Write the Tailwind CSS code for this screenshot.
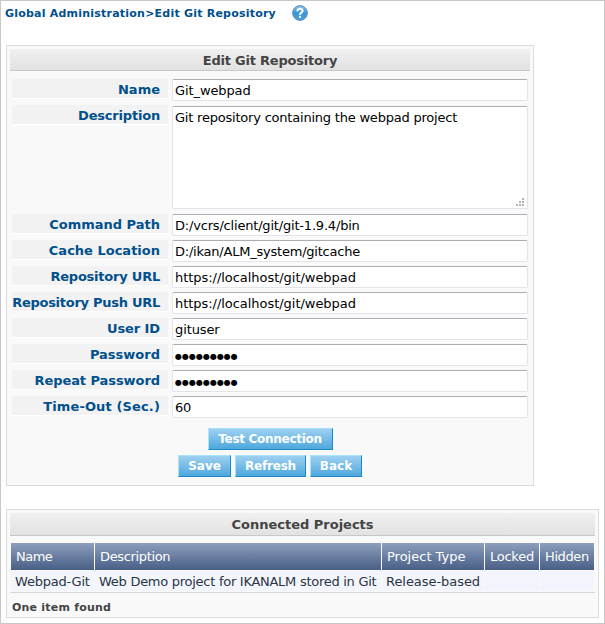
<!DOCTYPE html>
<html lang="en">
<head>
<meta charset="utf-8">
<title>Edit Git Repository</title>
<script src="https://cdn.jsdelivr.net/npm/@tailwindcss/browser@4"></script>
</head>
<body class="bg-white">
<div class="w-[605px] h-[624px] border border-[#c8c8c8] bg-white overflow-hidden pl-[5px] font-['DejaVu_Sans',sans-serif] text-[13px] leading-[16px] text-black whitespace-nowrap">
  <header class="flex items-center h-[24px] -ml-px text-[11px] font-bold text-[#00508c]">
    <span class="w-[287px] pt-px tracking-[0.22px]">Global Administration&gt;Edit Git Repository</span>
    <svg width="16" height="16" viewBox="0 0 16 16">
      <defs><linearGradient id="help" x1="0" y1="0" x2="0" y2="1"><stop offset="0" stop-color="#8ec6ee"/><stop offset=".5" stop-color="#3c93d3"/><stop offset="1" stop-color="#48a4e0"/></linearGradient></defs>
      <circle cx="8" cy="8" r="7.4" fill="url(#help)" stroke="#5c8db8" stroke-width="1"/>
      <path d="M5.4 6.2C5.4 3.1 10.6 3.1 10.6 5.9C10.6 7.8 8 7.6 8 9.8" fill="none" stroke="#fff" stroke-width="2"/>
      <rect x="7" y="10.8" width="2" height="2" fill="#fff"/>
    </svg>
  </header>

  <section class="mt-[20px] w-[528px] h-[441px] border border-[#dcdcdc] bg-[#f9f9f9] p-[3px]">
    <h2 class="h-[22px] border-b border-[#c8c8c8] bg-linear-to-b from-[#f0f0f0] to-[#e2e2e2] text-center font-bold text-[#444] leading-[23px] tracking-[-0.22px]">Edit Git Repository</h2>
    <div class="mt-[8px] ml-[2px] grid grid-cols-[156px_356px] gap-x-[4px] items-start">
      <label class="h-[20px] bg-[#f2f2f2] border-b border-white pt-[2px] pr-[8px] flex justify-end items-center font-bold text-[#00508c]">Name</label>
      <div class="h-[22px] mb-[4px] bg-white border border-[#e2e4ea] border-t-[#abadb3] rounded-[2px] pl-[2px] leading-[22px] tracking-[-0.1px]">Git_webpad</div>
      <label class="h-[20px] bg-[#f2f2f2] border-b border-white pt-[2px] pr-[8px] flex justify-end items-center font-bold text-[#00508c] tracking-[-0.2px]">Description</label>
      <div class="mt-px h-[103px] mb-[5px] bg-white border border-[#e2e4ea] border-t-[#abadb3] rounded-[2px] pl-[2px] leading-[22px] flex justify-between items-end">
        <span class="self-start tracking-[-0.21px]">Git repository containing the webpad project</span>
        <svg class="mr-[3px] mb-[2px]" width="8" height="8" fill="#b4b4b4"><path d="M6 0h2v2h-2zM3 3h2v2h-2zM6 3h2v2h-2zM0 6h2v2h-2zM3 6h2v2h-2zM6 6h2v2h-2z"/></svg>
      </div>
      <label class="h-[20px] bg-[#f2f2f2] border-b border-white pt-[2px] pr-[8px] flex justify-end items-center font-bold text-[#00508c]">Command Path</label>
      <div class="h-[22px] mb-[4px] bg-white border border-[#e2e4ea] border-t-[#abadb3] rounded-[2px] pl-[2px] leading-[22px] tracking-[-0.19px]">D:/vcrs/client/git/git-1.9.4/bin</div>
      <label class="h-[20px] bg-[#f2f2f2] border-b border-white pt-[2px] pr-[8px] flex justify-end items-center font-bold text-[#00508c]">Cache Location</label>
      <div class="h-[22px] mb-[4px] bg-white border border-[#e2e4ea] border-t-[#abadb3] rounded-[2px] pl-[2px] leading-[22px] tracking-[-0.22px]">D:/ikan/ALM_system/gitcache</div>
      <label class="h-[20px] bg-[#f2f2f2] border-b border-white pt-[2px] pr-[8px] flex justify-end items-center font-bold text-[#00508c] tracking-[-0.22px]">Repository URL</label>
      <div class="h-[22px] mb-[4px] bg-white border border-[#e2e4ea] border-t-[#abadb3] rounded-[2px] pl-[2px] leading-[22px] tracking-[-0.04px]">https://localhost/git/webpad</div>
      <label class="h-[20px] bg-[#f2f2f2] border-b border-white pt-[2px] pr-[8px] flex justify-end items-center font-bold text-[#00508c] tracking-[-0.27px]">Repository Push URL</label>
      <div class="h-[22px] mb-[4px] bg-white border border-[#e2e4ea] border-t-[#abadb3] rounded-[2px] pl-[2px] leading-[22px] tracking-[-0.04px]">https://localhost/git/webpad</div>
      <label class="h-[20px] bg-[#f2f2f2] border-b border-white pt-[2px] pr-[8px] flex justify-end items-center font-bold text-[#00508c] tracking-[-0.1px]">User ID</label>
      <div class="h-[22px] mb-[4px] bg-white border border-[#e2e4ea] border-t-[#abadb3] rounded-[2px] pl-[2px] leading-[22px] tracking-[-0.1px]">gituser</div>
      <label class="h-[20px] bg-[#f2f2f2] border-b border-white pt-[2px] pr-[8px] flex justify-end items-center font-bold text-[#00508c]">Password</label>
      <div class="h-[22px] mb-[4px] bg-white border border-[#e2e4ea] border-t-[#abadb3] rounded-[2px] pl-[2px] leading-[23px] text-[8px]">●●●●●●●●●</div>
      <label class="h-[20px] bg-[#f2f2f2] border-b border-white pt-[2px] pr-[8px] flex justify-end items-center font-bold text-[#00508c] tracking-[-0.07px]">Repeat Password</label>
      <div class="h-[22px] mb-[4px] bg-white border border-[#e2e4ea] border-t-[#abadb3] rounded-[2px] pl-[2px] leading-[23px] text-[8px]">●●●●●●●●●</div>
      <label class="h-[20px] bg-[#f2f2f2] border-b border-white pt-[2px] pr-[8px] flex justify-end items-center font-bold text-[#00508c] tracking-[0.13px]">Time-Out (Sec.)</label>
      <div class="h-[22px] mb-[4px] bg-white border border-[#e2e4ea] border-t-[#abadb3] rounded-[2px] pl-[2px] leading-[22px] tracking-[-0.2px]">60</div>
    </div>
    <div class="mt-[6px] flex flex-col items-center gap-[5px] font-bold text-white text-[12px]">
      <button class="w-[125px] h-[22px] border border-[#a8e4fa] border-r-[#1e87c8] border-b-[#1e87c8] bg-linear-to-b from-[#9dd0f0] to-[#4ba8dc] leading-[20px] tracking-[-0.3px]">Test Connection</button>
      <div class="flex gap-[4px]">
        <button class="w-[53px] h-[22px] border border-[#a8e4fa] border-r-[#1e87c8] border-b-[#1e87c8] bg-linear-to-b from-[#9dd0f0] to-[#4ba8dc] leading-[20px]">Save</button>
        <button class="w-[71px] h-[22px] border border-[#a8e4fa] border-r-[#1e87c8] border-b-[#1e87c8] bg-linear-to-b from-[#9dd0f0] to-[#4ba8dc] leading-[20px] tracking-[-0.2px]">Refresh</button>
        <button class="w-[52px] h-[22px] border border-[#a8e4fa] border-r-[#1e87c8] border-b-[#1e87c8] bg-linear-to-b from-[#9dd0f0] to-[#4ba8dc] leading-[20px]">Back</button>
      </div>
    </div>
  </section>

  <section class="mt-[23px] w-[593px] h-[109px] border border-[#dcdcdc] bg-[#f9f9f9] p-[3px]">
    <h2 class="h-[23px] border-b border-[#c8c8c8] bg-linear-to-b from-[#f0f0f0] to-[#e2e2e2] text-center font-bold text-[#444] leading-[23px]">Connected Projects</h2>
    <div class="mt-[7px] ml-px w-[583px] grid grid-cols-[83px_286px_102px_54px_54px] gap-px">
      <div class="h-[27px] pl-[5px] leading-[27px] text-white bg-linear-to-b from-[#8c9fbe] to-[#4a5f86] tracking-[-0.5px]">Name</div>
      <div class="h-[27px] pl-[5px] leading-[27px] text-white bg-linear-to-b from-[#8c9fbe] to-[#4a5f86] tracking-[-0.35px]">Description</div>
      <div class="h-[27px] pl-[5px] leading-[27px] text-white bg-linear-to-b from-[#8c9fbe] to-[#4a5f86]">Project Type</div>
      <div class="h-[27px] pl-[5px] leading-[27px] text-white bg-linear-to-b from-[#8c9fbe] to-[#4a5f86] tracking-[-0.25px]">Locked</div>
      <div class="h-[27px] pl-[5px] leading-[27px] text-white bg-linear-to-b from-[#8c9fbe] to-[#4a5f86] tracking-[-0.4px]">Hidden</div>
      <div class="h-[20px] pl-[4px] leading-[21px] text-[#2c3444] bg-[#f2f6fc] tracking-[-0.2px]">Webpad-Git</div>
      <div class="h-[20px] pl-[4px] leading-[21px] text-[#2c3444] bg-[#f2f6fc] tracking-[-0.27px]">Web Demo project for IKANALM stored in Git</div>
      <div class="h-[20px] pl-[4px] leading-[21px] text-[#2c3444] bg-[#f2f6fc] tracking-[-0.05px]">Release-based</div>
      <div class="h-[20px] bg-[#f2f6fc]"></div>
      <div class="h-[20px] bg-[#f2f6fc]"></div>
    </div>
    <div class="mt-[1px] border-t border-[#d6d6d6] pl-[2px] pt-[7px] text-[11px] font-bold text-[#444] tracking-[0.22px]">One item found</div>
  </section>
</div>
</body>
</html>
